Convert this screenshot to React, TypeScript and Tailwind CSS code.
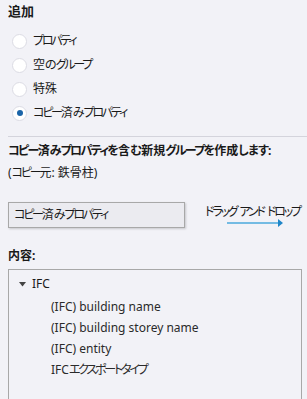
import type { ReactNode } from 'react'

const font = { fontFamily: '"Noto Sans", "Noto Sans CJK JP", sans-serif' }

const options = ['プロパティ', '空のグループ', '特殊', 'コピー済みプロパティ']

const treeItems = [
  '(IFC) building name',
  '(IFC) building storey name',
  '(IFC) entity',
  'IFCエクスポートタイプ',
]

// カナを詰めて表示（元の UI フォントは仮名が狭い）
function Narrow({ text, kana, hira }: { text: string; kana: string; hira: string }) {
  const parts = text.split(/([\u30A0-\u30FF]+|[\u3040-\u309F]+)/).filter(Boolean)
  const out: ReactNode[] = parts.map((p, i) => {
    if (/^[\u30A0-\u30FF]+$/.test(p)) return <span key={i} className={kana}>{p}</span>
    if (/^[\u3040-\u309F]+$/.test(p)) return <span key={i} className={hira}>{p}</span>
    return <span key={i}>{p}</span>
  })
  return <>{out}</>
}

function T({ text }: { text: string }) {
  return <Narrow text={text} kana="tracking-[-2.2px]" hira="tracking-[-1px]" />
}

function Radio({ label, checked }: { label: string; checked?: boolean }) {
  return (
    <div className="flex items-center h-[24px] gap-[6px]">
      <span className="w-[15px] h-[15px] rounded-full bg-white border border-[#dcdce4] flex items-center justify-center shrink-0">
        {checked && <span className="w-[6px] h-[6px] rounded-full bg-[#1a64a8]" />}
      </span>
      <span className="text-[12px] text-[#1a1a1a] leading-none whitespace-nowrap">
        <T text={label} />
      </span>
    </div>
  )
}

export default function App() {
  return (
    <div
      className="w-[307px] h-[399px] bg-[#f2f2f7] overflow-hidden pl-[8px] text-[#1a1a1a] [font-feature-settings:'palt']"
      style={font}
    >
      {/* 追加 */}
      <div className="h-[22px] pt-[3px] text-[13px] font-bold leading-[16px]">追加</div>
      <div className="pl-[4px] pt-[7px] flex flex-col">
        {options.map((o, i) => (
          <Radio key={o} label={o} checked={i === 3} />
        ))}
      </div>

      {/* 区切り */}
      <div className="mt-[11px] h-px bg-[#d4d4dc]" />

      <div className="mt-[6px] h-[16px] text-[12px] font-bold leading-[16px] whitespace-nowrap">
        <Narrow
          text="コピー済みプロパティを含む新規グループを作成します:"
          kana="tracking-[-1.7px]"
          hira="tracking-[-0.8px]"
        />
      </div>
      <div className="mt-[6px] h-[16px] text-[12px] leading-[16px]">
        <T text="(コピー元: 鉄骨柱)" />
      </div>

      <div className="mt-[21px] flex items-start">
        <div className="w-[177px] h-[26px] shrink-0 bg-[#ebebf0] border border-[#a8a8a8] shadow-[1px_1px_2px_rgba(0,0,0,0.18)] flex items-center pl-[5px] text-[12px] whitespace-nowrap">
          <T text="コピー済みプロパティ" />
        </div>
        <div className="ml-[20px] mt-[2px] flex flex-col">
          <span className="text-[12px] leading-[16px] whitespace-nowrap">
            <T text="ドラッグ アンド ドロップ" />
          </span>
          <svg width="58" height="8" viewBox="0 0 58 8" className="ml-[22px] -mt-[1px]">
            <line x1="0" y1="4" x2="51" y2="4" stroke="#4aa8dc" strokeWidth="1.5" />
            <polygon points="51,0 56,4 51,8" fill="#1f86c8" />
          </svg>
        </div>
      </div>

      <div className="mt-[20px] h-[16px] text-[12px] font-bold leading-[16px]">内容:</div>

      <div className="mt-[5px] mr-[5px] h-[160px] border border-[#a8a8a8] bg-[#f2f2f7] pt-[6px]">
        <div className="flex items-center h-[16px] pl-[10px] gap-[6px] text-[12px]">
          <svg width="7" height="5" viewBox="0 0 7 5">
            <polygon points="0,0 7,0 3.5,4.5" fill="#444" />
          </svg>
          <span>IFC</span>
        </div>
        <div className="flex flex-col pl-[42px] pt-[4px]">
          {treeItems.map((t) => (
            <div key={t} className="h-[21px] text-[12px] leading-[21px] text-[#2a2a2a] whitespace-nowrap">
              <T text={t} />
            </div>
          ))}
        </div>
      </div>
    </div>
  )
}
